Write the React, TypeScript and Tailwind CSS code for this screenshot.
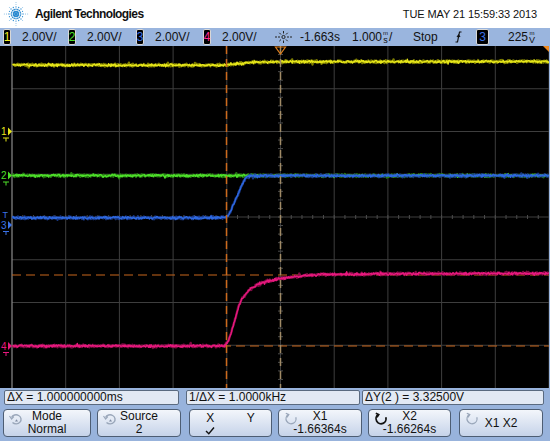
import React from "react";

type P = [number, number];

function rng(seed: number) {
  let s = seed >>> 0;
  return () => {
    s = (Math.imul(s, 1664525) + 1013904223) >>> 0;
    return s / 4294967296;
  };
}

function interp(pts: P[], x: number) {
  if (x <= pts[0][0]) return pts[0][1];
  for (let i = 0; i < pts.length - 1; i++) {
    const [x0, y0] = pts[i];
    const [x1, y1] = pts[i + 1];
    if (x >= x0 && x <= x1) return y0 + ((y1 - y0) * (x - x0)) / (x1 - x0);
  }
  return pts[pts.length - 1][1];
}

function smooth(pts: P[], x: number, win: number) {
  if (win <= 0) return interp(pts, x);
  let s = 0;
  let n = 0;
  for (let dx = -win; dx <= win; dx += 0.5) {
    s += interp(pts, x + dx);
    n++;
  }
  return s / n;
}

function tracePath(pts: P[], seed: number, amp: number, win: number) {
  const r = rng(seed);
  let d = "";
  for (let x = 12.5; x <= 549; x += 0.6) {
    let n = (r() + r() - 1) * amp;
    if (r() < 0.05) n += (r() - 0.5) * amp * 2.2;
    const y = smooth(pts, x, win) - 46 + n;
    d += (d ? "L" : "M") + x.toFixed(2) + " " + y.toFixed(2);
  }
  return d;
}

const yellowPts: P[] = [[0, 65], [226, 65.2], [232, 64.2], [240, 63.3], [255, 62.2], [280, 61.7], [560, 61.5]];
const greenPts: P[] = [[0, 175.6], [560, 175.6]];
const bluePts: P[] = [[0, 217.8], [225, 217.8], [229, 214.5], [245, 178.5], [248.5, 175.8], [560, 175.5]];
const pinkPts: P[] = [
  [0, 346], [226, 346], [229, 340], [233, 327], [240, 301], [250, 289], [260, 283],
  [280, 278.5], [300, 276], [320, 274.5], [400, 273.8], [560, 273.3],
];

const X0 = 12;
const DX = 53.7;
const H = 342;
const DY = H / 8;

function Marker({ label, cy, color }: { label: string; cy: number; color: string }) {
  return (
    <g fill={color} stroke={color}>
      <text x={1} y={cy + 3.5} fontSize={10} stroke="none" fontFamily="Liberation Sans, Arial, sans-serif">
        {label}
      </text>
      <polygon points={`8,${cy - 4} 12,${cy} 8,${cy + 4}`} stroke="none" />
      <line x1={3} y1={cy + 6.5} x2={9} y2={cy + 6.5} strokeWidth={1} />
      <line x1={6} y1={cy + 6.5} x2={6} y2={cy + 10} strokeWidth={1} />
    </g>
  );
}

function Trace({ pts, seed, color, dark, win }: { pts: P[]; seed: number; color: string; dark: string; win: number }) {
  const d = tracePath(pts, seed, 1.5, win);
  const d2 = tracePath(pts, seed + 17, 1.6, win);
  return (
    <g fill="none" strokeLinejoin="round">
      <path d={d2} stroke={dark} strokeWidth={2.4} opacity={0.85} />
      <path d={d} stroke={color} strokeWidth={1.4} />
    </g>
  );
}

function Screen() {
  const vlines = Array.from({ length: 11 }, (_, i) => X0 + i * DX);
  const hlines = Array.from({ length: 7 }, (_, j) => (j + 1) * DY);
  const cx = X0 + 5 * DX;
  const cy = 4 * DY;
  const hticks = Array.from({ length: 49 }, (_, k) => X0 + (k + 1) * (DX / 5));
  const vticks = Array.from({ length: 39 }, (_, k) => (k + 1) * (DY / 5));
  return (
    <svg width={549} height={H} viewBox={`0 0 549 ${H}`} className="block bg-black">
      {vlines.slice(1).map((x, i) => (
        <line key={"v" + i} x1={x} y1={0} x2={x} y2={H} stroke="#3e3e3e" strokeWidth={1} />
      ))}
      {hlines.map((y, i) => (
        <line key={"h" + i} x1={X0} y1={y} x2={549} y2={y} stroke="#3e3e3e" strokeWidth={1} />
      ))}
      {hticks.map((x, i) => (
        <line key={"ht" + i} x1={x} y1={cy - 2} x2={x} y2={cy + 2} stroke="#4c4c4c" strokeWidth={1} />
      ))}
      {vticks.map((y, i) => (
        <line key={"vt" + i} x1={cx - 2.5} y1={y} x2={cx + 2.5} y2={y} stroke="#4c4c4c" strokeWidth={1} />
      ))}
      <line x1={X0} y1={0} x2={X0} y2={H} stroke="#8c8c8c" strokeWidth={1.2} />

      {/* horizontal Y cursors */}
      <line x1={X0} y1={229} x2={549} y2={229} stroke="#c8671c" strokeWidth={1.2} strokeDasharray="9 5" />
      <line x1={X0} y1={300} x2={549} y2={300} stroke="#c8671c" strokeWidth={1.2} strokeDasharray="9 5" />

      <Trace pts={yellowPts} seed={11} color="#e6e61a" dark="#8f8f00" win={4} />
      <Trace pts={greenPts} seed={23} color="#4ee02a" dark="#2a8a14" win={0} />
      <Trace pts={bluePts} seed={37} color="#2e68e0" dark="#1c3f96" win={1.5} />
      <Trace pts={pinkPts} seed={51} color="#e8187e" dark="#8e0e4c" win={3} />

      {/* vertical X cursors */}
      <line x1={226.5} y1={0} x2={226.5} y2={H} stroke="#cc6a1c" strokeWidth={1.5} strokeDasharray="8 5" />
      <line x1={280.5} y1={0} x2={280.5} y2={H} stroke="#a08a66" strokeWidth={1.5} strokeDasharray="8 5" />

      {/* top markers */}
      <polygon points="275.5,1 285.5,1 280.5,8" fill="none" stroke="#e0801e" strokeWidth={1.2} />
      <polygon points="543,0 549,0 549,6" fill="#f08a20" />

      {/* left markers */}
      <Marker label="1" cy={131.5 - 46} color="#e6e61a" />
      <Marker label="2" cy={175.5 - 46} color="#4ee02a" />
      <text x={2.5} y={218 - 46} fontSize={9} fill="#3a72e8" fontFamily="Liberation Sans, Arial, sans-serif">
        T
      </text>
      <Marker label="3" cy={225 - 46} color="#3a72e8" />
      <Marker label="4" cy={346 - 46} color="#e8187e" />
    </svg>
  );
}

function Logo() {
  const dots: React.ReactElement[] = [];
  const cx = 13;
  const cy = 12;
  for (let i = 0; i < 16; i++) {
    const a = (i * Math.PI) / 8;
    const n = i % 4 === 0 ? 5 : i % 2 === 0 ? 4 : 3;
    for (let k = 1; k <= n; k++) {
      const r = k * 2.35;
      dots.push(
        <circle key={i + "-" + k} cx={cx + r * Math.cos(a)} cy={cy + r * Math.sin(a)} r={Math.max(0.42, 1.15 - k * 0.17)} />
      );
    }
  }
  return (
    <svg width={26} height={24} viewBox="0 0 26 24" fill="#2b8ad0" className="ml-[3px] shrink-0">
      <circle cx={cx} cy={cy} r={1.3} />
      {dots}
    </svg>
  );
}

function ChBox({ n, color, w = "w-[8px]" }: { n: string; color: string; w?: string }) {
  return (
    <span
      className={`${w} h-[16px] bg-black border border-[#d8d8d8] rounded-[2px] flex items-center justify-center text-[12px] leading-none shrink-0`}
      style={{ color }}
    >
      {n}
    </span>
  );
}

function Seg({ n, color, w }: { n: string; color: string; w: string }) {
  return (
    <div className={`${w} flex items-center shrink-0`}>
      <ChBox n={n} color={color} />
      <span className="ml-[11px]">2.00V/</span>
    </div>
  );
}

function Stack({ top, bottom }: { top: string; bottom: string }) {
  return (
    <span className="inline-flex flex-col items-center leading-none mx-[1px]">
      <span className="text-[6px] leading-[5px]">{top}</span>
      <span className="text-[9px] leading-[8px]">{bottom}</span>
    </span>
  );
}

function TrigIcon() {
  return (
    <svg width={17} height={14} viewBox="0 0 17 14" fill="none" stroke="#222" strokeWidth={1}>
      <circle cx={8.5} cy={7} r={1.6} />
      <line x1={8.5} y1={1} x2={8.5} y2={3.5} />
      <line x1={8.5} y1={10.5} x2={8.5} y2={13} />
      <line x1={4.3} y1={2.8} x2={6} y2={4.5} />
      <line x1={11} y1={9.5} x2={12.7} y2={11.2} />
      <line x1={12.7} y1={2.8} x2={11} y2={4.5} />
      <line x1={6} y1={9.5} x2={4.3} y2={11.2} />
      <line x1={0} y1={7} x2={2} y2={7} />
      <line x1={3} y1={7} x2={5} y2={7} />
      <line x1={12} y1={7} x2={14} y2={7} />
      <line x1={15} y1={7} x2={17} y2={7} />
    </svg>
  );
}

function SlopeIcon() {
  return (
    <svg width={7} height={12} viewBox="0 0 7 12" fill="none" stroke="#111" strokeWidth={1.2}>
      <path d="M0.5 11 H2.5 L4.5 1 H6.5" />
      <path d="M2 6 L3.6 4 L5 6" />
    </svg>
  );
}

function Knob({ active, variant }: { active?: boolean; variant: "entry" | "cursor" }) {
  const stroke = active ? "#111" : "#9aa7ba";
  if (variant === "entry") {
    return (
      <svg width={16} height={12} viewBox="0 0 16 12" fill="none" className="absolute left-[4px] top-[3px]">
        <path d="M3.5 4.5 A5 4.5 0 1 1 4.5 9.5" stroke={stroke} strokeWidth={1.4} />
        <path d="M1.5 3 L3.6 6 L5.8 3.5" stroke={stroke} strokeWidth={1.2} />
        <path d="M7 8.5 L10 8.5 L8.5 6.2 Z" fill="#7f8ca2" />
      </svg>
    );
  }
  return (
    <svg width={14} height={14} viewBox="0 0 14 14" fill="none" className="absolute left-[5px] top-[2px]">
      <path d="M4.2 2.6 A5 5 0 1 0 11.8 5.2" stroke={stroke} strokeWidth={active ? 1.8 : 1.3} />
      <path d="M1.8 1.2 L4.8 2.6 L3 5.4" stroke={stroke} strokeWidth={active ? 1.6 : 1.2} />
    </svg>
  );
}

function Btn({ w, ml, children, icon }: { w: string; ml: string; children: React.ReactNode; icon?: React.ReactNode }) {
  return (
    <div
      className={`${w} ${ml} h-[28px] shrink-0 relative border border-[#4d5d73] rounded-[4px] bg-linear-to-b from-[#f3f6fb] to-[#c6d3e9] flex flex-col items-center justify-center text-[12px] leading-[13px] text-[#111]`}
    >
      {icon}
      {children}
    </div>
  );
}

function Meas({ w, ml, children }: { w: string; ml: string; children: React.ReactNode }) {
  return (
    <div
      className={`${w} ${ml} h-[15px] shrink-0 border border-[#5a6a80] bg-[#e2e9f4] rounded-[2px] pl-[2px] text-[12px] leading-[13px] text-[#111] whitespace-nowrap overflow-hidden`}
    >
      {children}
    </div>
  );
}

export default function App() {
  return (
    <div className="w-[550px] h-[441px] overflow-hidden flex flex-col bg-white font-['Liberation_Sans',Arial,sans-serif] text-[#111]">
      {/* header */}
      <div className="h-[28px] flex items-center bg-white shrink-0">
        <Logo />
        <span className="ml-[6px] text-[12px] font-bold tracking-[-0.6px] text-[#111]">Agilent Technologies</span>
        <span className="ml-auto mr-[13px] text-[11px] tracking-[-0.1px] text-[#111]">TUE MAY 21 15:59:33 2013</span>
      </div>

      {/* channel bar */}
      <div className="h-[18px] bg-[#9ab5de] flex items-center pl-[3px] text-[12px] shrink-0">
        <Seg n="1" color="#f0f020" w="w-[65px]" />
        <Seg n="2" color="#4ee02a" w="w-[68px]" />
        <Seg n="3" color="#3a72e8" w="w-[67px]" />
        <Seg n="4" color="#ff2a90" w="w-[72px]" />
        <div className="w-[25px] flex items-center shrink-0">
          <TrigIcon />
        </div>
        <span className="w-[52px] shrink-0">-1.663s</span>
        <span className="w-[61px] shrink-0 flex items-center">
          1.000
          <Stack top="m" bottom="s" />/
        </span>
        <span className="w-[42px] shrink-0">Stop</span>
        <span className="w-[21px] shrink-0 flex items-center">
          <SlopeIcon />
        </span>
        <ChBox n="3" color="#3a72e8" w="w-[13px]" />
        <span className="ml-[19px] flex items-center">
          225
          <Stack top="m" bottom="V" />
        </span>
      </div>

      {/* screen */}
      <div className="flex h-[342px] shrink-0">
        <Screen />
        <div className="w-[1px] bg-[#9ab5de]" />
      </div>

      {/* bottom softkeys */}
      <div className="flex-1 bg-[#98b3dc] flex flex-col">
        <div className="flex mt-[2px]">
          <Meas w="w-[175px]" ml="ml-[4px]">ΔX = 1.000000000ms</Meas>
          <Meas w="w-[174px]" ml="ml-[7px]">1/ΔX = 1.0000kHz</Meas>
          <Meas w="w-[182px]" ml="ml-[2px]">ΔY(2 ) = 3.32500V</Meas>
        </div>
        <div className="flex mt-[4px]">
          <Btn w="w-[88px]" ml="ml-[3px]" icon={<Knob variant="entry" />}>
            <span>Mode</span>
            <span>Normal</span>
          </Btn>
          <Btn w="w-[84px]" ml="ml-[6px]" icon={<Knob variant="entry" />}>
            <span>Source</span>
            <span>2</span>
          </Btn>
          <Btn w="w-[83px]" ml="ml-[8px]">
            <div className="grid grid-cols-2 w-full">
              <span className="text-center">X</span>
              <span className="text-center">Y</span>
              <span className="flex justify-center pt-[1px]">
                <svg width={10} height={9} viewBox="0 0 10 9" fill="none" stroke="#111" strokeWidth={1.4}>
                  <path d="M1 5 L3.8 7.8 L9 1.5" />
                </svg>
              </span>
              <span />
            </div>
          </Btn>
          <Btn w="w-[84px]" ml="ml-[6px]" icon={<Knob variant="cursor" />}>
            <span>X1</span>
            <span>-1.66364s</span>
          </Btn>
          <Btn w="w-[83px]" ml="ml-[6px]" icon={<Knob variant="cursor" active />}>
            <span>X2</span>
            <span>-1.66264s</span>
          </Btn>
          <Btn w="w-[84px]" ml="ml-[8px]" icon={<Knob variant="cursor" />}>
            <span>X1 X2</span>
          </Btn>
        </div>
      </div>
    </div>
  );
}
